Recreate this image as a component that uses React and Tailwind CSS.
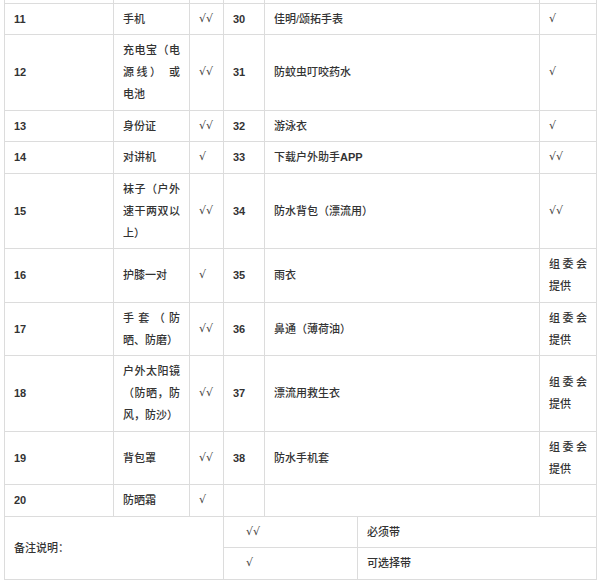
const rows = [
  ["11", "手机", "√√", "30", "佳明/颂拓手表", "√"],
  ["12", "充电宝（电源线） 或电池", "√√", "31", "防蚊虫叮咬药水", "√"],
  ["13", "身份证", "√√", "32", "游泳衣", "√"],
  ["14", "对讲机", "√", "33", "下载户外助手APP", "√√"],
  ["15", "袜子（户外速干两双以上）", "√√", "34", "防水背包（漂流用）", "√√"],
  ["16", "护膝一对", "√", "35", "雨衣", "组委会提供"],
  ["17", "手套（防晒、防磨）", "√√", "36", "鼻通（薄荷油）", "组委会提供"],
  ["18", "户外太阳镜（防晒，防风，防沙）", "√√", "37", "漂流用救生衣", "组委会提供"],
  ["19", "背包罩", "√√", "38", "防水手机套", "组委会提供"],
  ["20", "防晒霜", "√", "", "", ""],
];

const cell = "border border-[#dcdcdc] px-[9px] py-[4.25px] align-middle text-justify";
const mark = " font-['DejaVu_Sans',sans-serif] text-[#444]";

export default function App() {
  return (
    <div className="w-[600px] h-[586px] overflow-hidden bg-white font-['Liberation_Sans','Noto_Sans_CJK_SC',sans-serif] text-[11px] leading-[22px] text-[#333]">
      <table className="ml-[4px] w-[593px] table-fixed border-collapse">
        <colgroup>
          <col className="w-[109px]" />
          <col className="w-[76px]" />
          <col className="w-[34px]" />
          <col className="w-[41px]" />
          <col className="w-[93px]" />
          <col className="w-[182px]" />
          <col className="w-[57px]" />
        </colgroup>
        <tbody>
          {/* tail of the row above, cut off by the screenshot */}
          <tr>
            <td className="h-[3px] p-0 border-x border-b border-[#dcdcdc]" />
            <td className="h-[3px] p-0 border-x border-b border-[#dcdcdc]" />
            <td className="h-[3px] p-0 border-x border-b border-[#dcdcdc]" />
            <td className="h-[3px] p-0 border-x border-b border-[#dcdcdc]" />
            <td colSpan={2} className="h-[3px] p-0 border-x border-b border-[#dcdcdc]" />
            <td className="h-[3px] p-0 border-x border-b border-[#dcdcdc]" />
          </tr>
          {rows.map(([a, b, c, d, e, f]) => (
            <tr key={a}>
              <td className={cell + " font-bold"}>{a}</td>
              <td className={cell + " font-medium"}>{b}</td>
              <td className={cell + mark}>{c}</td>
              <td className={cell + " font-bold"}>{d}</td>
              <td colSpan={2} className={cell + " font-medium"}>
                {e.endsWith("APP") ? (
                  <>
                    {e.slice(0, -3)}
                    <span className="font-bold">APP</span>
                  </>
                ) : (
                  e
                )}
              </td>
              <td className={cell + (f.startsWith("√") ? mark : " font-medium")}>{f}</td>
            </tr>
          ))}
          <tr>
            <td colSpan={3} rowSpan={2} className={cell + " font-medium"}>
              备注说明：
            </td>
            <td colSpan={2} className={cell + mark + " pl-[22px]"}>
              √√
            </td>
            <td colSpan={2} className={cell + " font-medium"}>
              必须带
            </td>
          </tr>
          <tr>
            <td colSpan={2} className={cell + mark + " pl-[22px]"}>
              √
            </td>
            <td colSpan={2} className={cell + " font-medium"}>
              可选择带
            </td>
          </tr>
        </tbody>
      </table>
    </div>
  );
}
